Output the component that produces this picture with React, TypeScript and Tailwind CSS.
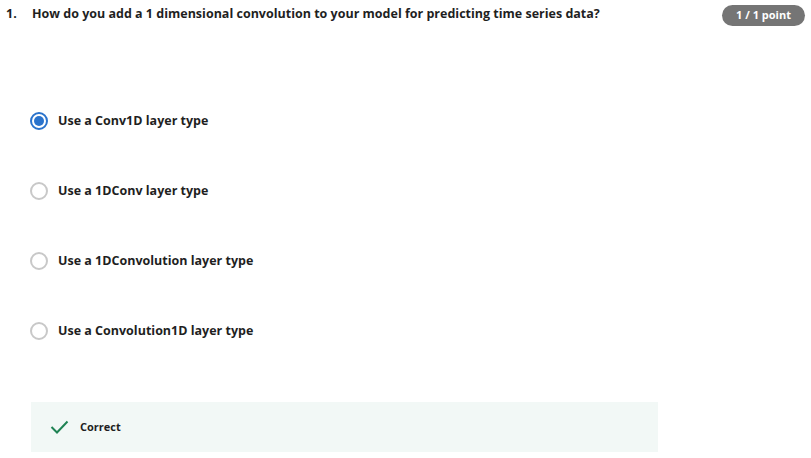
import React from "react";

const options = [
  "Use a Conv1D layer type",
  "Use a 1DConv layer type",
  "Use a 1DConvolution layer type",
  "Use a Convolution1D layer type",
];

export default function App() {
  return (
    <div
      className="w-[811px] h-[458px] bg-white text-[#1f1f1f] overflow-hidden"
      style={{ fontFamily: '"Open Sans", sans-serif' }}
    >
      <div className="flex items-start justify-between pl-[6px] pr-[6px] pt-[5px]">
        <div className="flex text-[12.5px] font-bold leading-[18px]">
          <span className="w-[26px]">1.</span>
          <span>How do you add a 1 dimensional convolution to your model for predicting time series data?</span>
        </div>
        <div className="h-[21px] w-[83px] rounded-full bg-[#757575] text-white text-[11px] font-bold flex items-center justify-center">
          1 / 1 point
        </div>
      </div>
      <div className="flex flex-col gap-[51px] pl-[30px] pt-[85px]">
        {options.map((o, i) => (
          <div key={o} className="flex items-center gap-[10px] h-[19px]">
            {i === 0 ? (
              <span className="w-[18px] h-[18px] rounded-full border-2 border-[#2a73cc] flex items-center justify-center">
                <span className="w-[10px] h-[10px] rounded-full bg-[#2a73cc]" />
              </span>
            ) : (
              <span className="w-[18px] h-[18px] rounded-full border-2 border-[#c8c8c8]" />
            )}
            <span className="text-[12.5px] font-bold leading-[18px]">{o}</span>
          </div>
        ))}
      </div>
      <div className="ml-[31px] mt-[62px] w-[627px] h-[50px] bg-[#f2f8f6] flex items-center pl-[19px] gap-[11px]">
        <svg width="19" height="14" viewBox="0 0 19 14" fill="none">
          <path d="M1.5 7 L7 12.5 L17.5 1.5" stroke="#1f8354" strokeWidth="2" />
        </svg>
        <span className="text-[11px] font-bold">Correct</span>
      </div>
    </div>
  );
}
